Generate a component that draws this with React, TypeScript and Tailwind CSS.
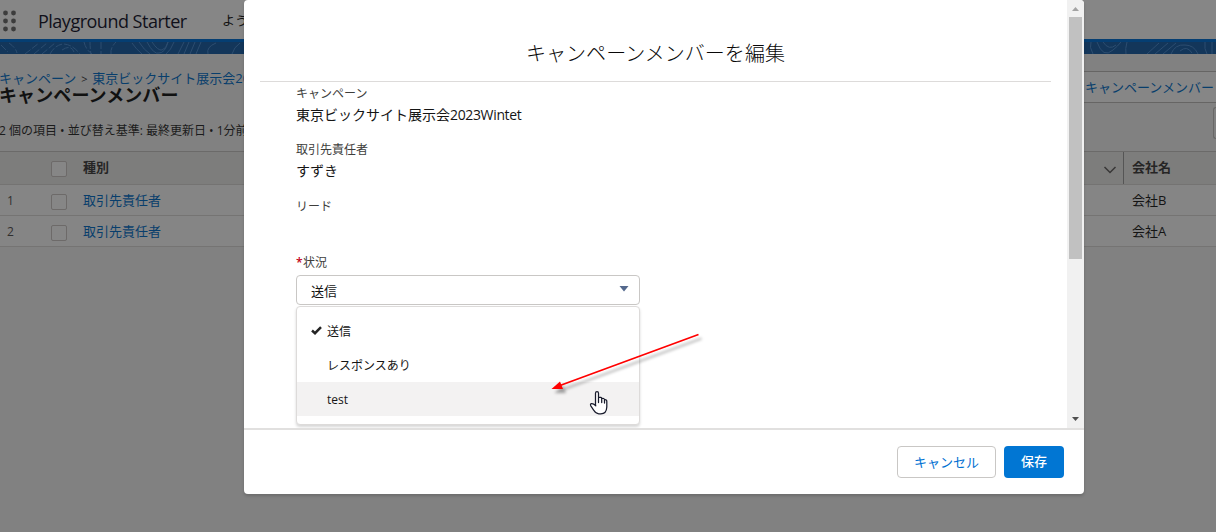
import React from "react";

const FONT = "font-['Open_Sans','Noto_Sans_CJK_JP',sans-serif] font-normal";

function Contours() {
  return (
    <svg className="block h-full w-full" viewBox="0 0 1216 12" preserveAspectRatio="none" fill="none" stroke="#2c4d70" strokeWidth="1">
      {[0, 420, 840].map((x) => (
        <g key={x} transform={`translate(${x} 0)`}>
          <path d="M1 3 8 10M9 1q7 5 8 10M25 12 39 1M34 12 47 1M42 12 55 1M50 12q5-9 13-10q9 0 17 10M62 8q9-6 12 2M84 0q2 8 8 12M90 0q0 6 1 12M101 0v12M111 12q-1-6 5-12" strokeDasharray="7 2" />
          <path d="M132 1q4 6 10 11M139 0q5 8 11 12M147 0q7 13 12 11q6 0 9-11M152 0q6 9 10 8q4-1 6-8M174 0q-3 8-8 12M184 0l-6 12M189 0l-5 12M195 0l-5 12M201 0l-5 12M216 1q-10 4-8 11M232 12q2-7 8-11" />
        </g>
      ))}
      <path d="M1091 0q-2 5 2 12M1097 0q6 17 16 8q5-4 8-8M1103 0q6 9 13 3M1127 0q-2 7-1 12M1147 12 1159 1M1155 12 1168 1M1163 12 1176 1M1171 12q4-10 14-9q9 0 13 9M1180 9q7-6 12 2M1205 0q-1 7 2 12M1212 0v12" />
    </svg>
  );
}

function Box() {
  return <span className="h-4 w-4 shrink-0 rounded-[2px] border border-[#6d6a69] bg-[#868686]" />;
}

function Row({ index, company }: { index: number; company: string }) {
  return (
    <div className="flex h-[31px] items-center border-b border-[#757473] bg-[#858585]">
      <span className="mt-[2px] w-[51px] pl-[7px] text-[12px] text-[#302f2f]">{index}</span>
      <span className="mt-[3px] flex w-8"><Box /></span>
      <span className="mt-px w-[1041px] text-[13px] text-[#083e6c]">取引先責任者</span>
      <span className="mt-px pl-2 text-[13px] text-[#141414]">{company}</span>
    </div>
  );
}

function Background() {
  return (
    <div className="flex h-[532px] w-[1216px] flex-col bg-[#818181]">
      <header className="flex h-[39px] items-center bg-[#868686]">
        <svg width="20" height="24" viewBox="0 0 20 24" className="mt-[2px]" fill="#3c3c3c">
          {[4, 12, 20].map((y) => [5.5, 13.5].map((x) => <circle key={`${x}-${y}`} cx={x} cy={y} r="2.4" />))}
        </svg>
        <span className="ml-[18px] mt-[3px] w-[184px] text-[18px] tracking-[-0.5px] text-[#10101a]">Playground Starter</span>
        <span className="mt-[3px] text-[13px] text-[#141414]">ようこそ</span>
      </header>
      <div className="h-[3px] bg-[#053e72]" />
      <div className="h-3 bg-[#13365a]"><Contours /></div>
      <div className="flex h-[97px] justify-between">
        <div className="pt-4">
          <div className="-ml-px flex h-[17px] items-center text-[13px] leading-[15px] text-[#083e6c]">
            <span>キャンペーン</span><span className="w-4 text-center text-[11px] text-[#222]">&gt;</span><span>東京ビックサイト展示会2023Wintet</span>
          </div>
          <h1 className="-ml-px h-[19px] text-[18px] font-bold leading-[17px] tracking-[0.1px] text-[#111]">キャンペーンメンバー</h1>
          <p className="-ml-px mt-[14px] text-[12px] leading-[22px] text-[#1b1b1b]">2 個の項目 • 並び替え基準: 最終更新日 • 1分前</p>
        </div>
        <div className="w-[132px] pt-[17px]">
          <div className="flex h-8 items-center border-y border-[#666564] bg-[#868686] pl-px pt-px text-[13px] text-[#083e6c]">キャンペーンメンバー</div>
          <div className="ml-[129px] mt-1 h-8 w-[3px] rounded-l-[4px] border-y border-l border-[#696867]" />
        </div>
      </div>
      <div className="flex h-[34px] border-y border-[#6b6a69] border-b-[#747372] bg-[#7d7d7c] text-[13px] font-bold text-[#262525]">
        <span className="flex w-[51px]" />
        <span className="mt-[2px] flex w-8 items-center"><Box /></span>
        <span className="w-[1020px] leading-[31px]">種別</span>
        <svg width="14" height="10" viewBox="0 0 14 10" className="mt-[13px]" fill="none" stroke="#383737" strokeWidth="1.5"><path d="m1.5 2 5.5 5.5L12.500 2" /></svg>
        <span className="ml-[6px] border-l border-[#555] pl-2 leading-[31px]">会社名</span>
      </div>
      <Row index={1} company="会社B" />
      <Row index={2} company="会社A" />
    </div>
  );
}

function Field({ label, value, latin }: { label: string; value?: string; latin?: string }) {
  return (
    <div className="h-[56.3px]">
      <div className="text-[12px] leading-[20px] text-[#3e3e3c]">{label}</div>
      <div className="text-[14px] leading-[22px] text-[#151515]">{value}<span className="tracking-[-0.35px]">{latin}</span></div>
    </div>
  );
}

function Option({ label, selected, active }: { label: string; selected?: boolean; active?: boolean }) {
  return (
    <div className={`flex h-[34px] items-center pl-[14px] text-[12px] text-[#151515] ${active ? "bg-[#f3f2f2]" : ""}`}>
      <span className="-mt-px w-4">
        {selected && <svg width="11" height="9" viewBox="0 0 11 9" fill="none" stroke="#242424" strokeWidth="2.5"><path d="M1 4.500 4 7.200 10 1.200" /></svg>}
      </span>
      <span className="mt-[2px]">{label}</span>
    </div>
  );
}

function Scrollbar() {
  return (
    <div className="flex w-[17px] flex-col items-center bg-[#f1f1f1]">
      <svg width="17" height="17" viewBox="0 0 17 17"><path d="m5 11 3.500-4 3.500 4z" fill="#a3a3a3" /></svg>
      <div className="h-[242px] w-[13px] bg-[#c1c1c1]" />
      <svg className="mb-px mt-auto" width="17" height="17" viewBox="0 0 17 17"><path d="m5 7 3.500 4L12 7z" fill="#505050" /></svg>
    </div>
  );
}

function Modal() {
  return (
    <div className="absolute left-[244px] top-0 flex h-[494px] w-[840px] flex-col overflow-hidden rounded-[4px] bg-white shadow-[0_2px_3px_rgba(0,0,0,0.16)]">
      <div className="flex h-[428px]">
        <div className="flex-1 px-4">
          <h2 className="h-[82px] border-b border-[#dddbda] pt-[39px] text-center text-[20px] font-light leading-[30px] tracking-[0.05px] text-[#080707]">キャンペーンメンバーを編集</h2>
          <div className="px-9 pt-[2px]">
            <Field label="キャンペーン" value="東京ビックサイト展示会" latin="2023Wintet" />
            <Field label="取引先責任者" value="すずき" />
            <Field label="リード" />
            <div className="flex h-[22px] text-[12px] leading-[20px] text-[#3e3e3c]"><span className="w-[7px] font-semibold text-[#c20014]">*</span>状況</div>
            <div className="flex h-[30px] w-[344px] items-center justify-between rounded-[4px] border border-[#c9c7c5] pl-[14px] pr-[10px] text-[13px] text-[#151515]">
              <span className="mt-[4px]">送信</span>
              <svg width="10" height="6" viewBox="0 0 10 6" className="-mt-px"><path d="M0.500 0h9L5 5.500z" fill="#54698d" /></svg>
            </div>
            <div className="mt-px h-[119px] w-[344px] rounded-[4px] border border-[#dddbda] bg-white pt-[7px] shadow-[0_2px_3px_rgba(0,0,0,0.16)]">
              <Option label="送信" selected />
              <Option label="レスポンスあり" />
              <Option label="test" active />
            </div>
          </div>
        </div>
        <Scrollbar />
      </div>
      <footer className="flex h-[66px] items-center justify-end gap-2 border-t-2 border-[#e1e0df] pr-5 text-[13px]">
        <button className="h-8 w-[99px] rounded-[4px] border border-[#c9c7c5] pt-px text-[#0070d2]">キャンセル</button>
        <button className="h-8 w-[60px] rounded-[4px] bg-[#0176d3] font-medium text-white">保存</button>
      </footer>
    </div>
  );
}

export default function App() {
  return (
    <div className={`relative h-[532px] w-[1216px] overflow-hidden whitespace-nowrap ${FONT}`}>
      <Background />
      <Modal />
      <svg className="absolute left-[540px] top-[325px] drop-shadow-[3px_4px_1.5px_rgba(0,0,0,0.35)]" width="175" height="80" viewBox="0 0 175 80">
        <path d="M158.500 9.500 20 60.500" stroke="#ff0000" strokeWidth="1.800" />
        <path d="m11.500 64 8.500-7.500 3 7.500z" fill="#ff0000" />
      </svg>
      <svg className="absolute left-[588px] top-[390px]" width="22" height="26" viewBox="0 0 22 26" fill="white" stroke="#181b2c" strokeWidth="1.250" strokeLinecap="round" strokeLinejoin="round">
        <path d="M7.500 15.500V3.200q0-1.700 1.500-1.700t1.500 1.700V7.500q3-.6 3.200 1q2.600-.5 2.800 1.200q2.300-.4 2.300 1.800V17q-.3 6.800-6 6.800h-2q-3 0-5-3.500l-3-4.500q-.8-1.700.5-2.200 1.800-.5 4.500 2.200z" />
        <path d="M10.500 8v4.500M13.700 8.800v3.700M16.500 10v3" />
      </svg>
    </div>
  );
}
